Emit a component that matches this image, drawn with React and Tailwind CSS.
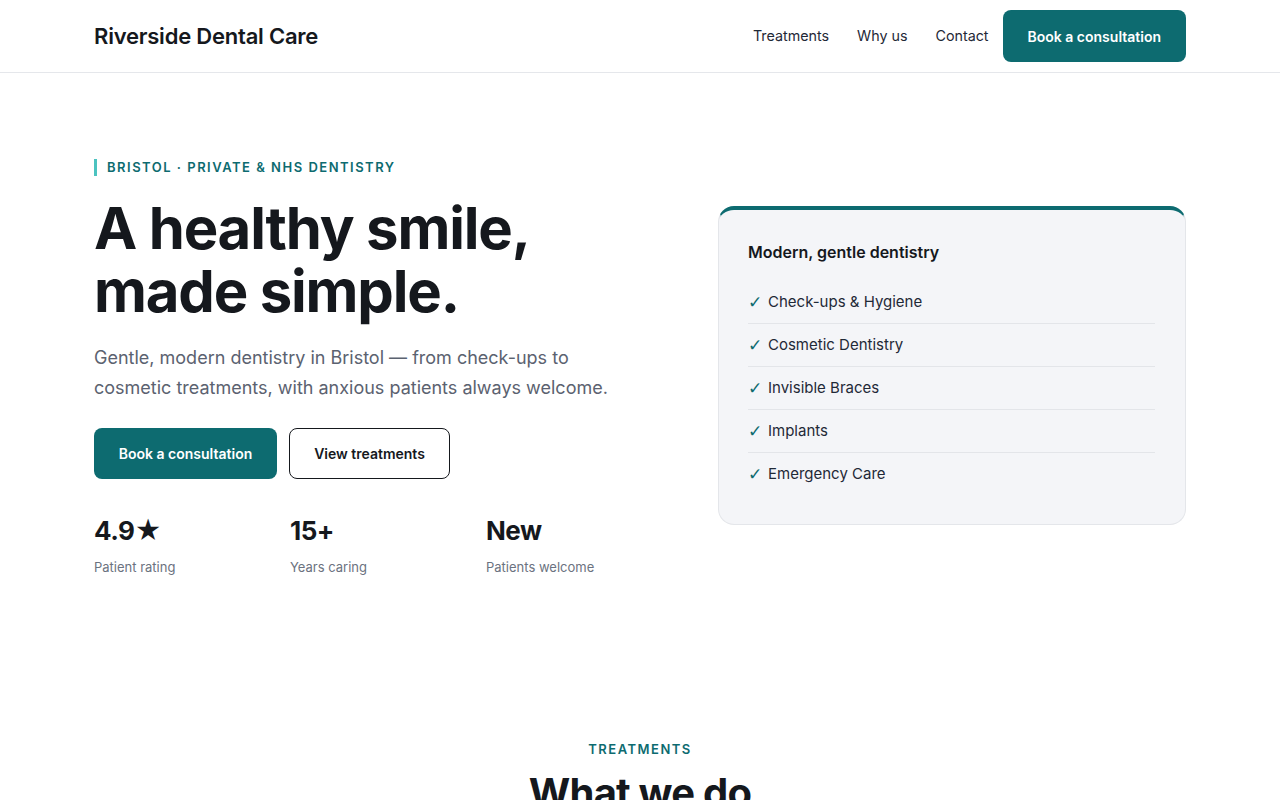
export default function App() {
  const items = ["Check-ups & Hygiene", "Cosmetic Dentistry", "Invisible Braces", "Implants", "Emergency Care"];
  const stats = [
    ["4.9★", "Patient rating"],
    ["15+", "Years caring"],
    ["New", "Patients welcome"],
  ];
  return (
    <div className="min-h-screen bg-white text-[#15181d] font-['Inter','Liberation_Sans',sans-serif]">
      <header className="border-b border-[#e5e7eb] bg-white">
        <div className="mx-auto max-w-[1140px] px-6 h-[72px] flex items-center justify-between">
          <div className="text-[22px] font-semibold tracking-[-0.01em] text-[#15181d]">Riverside Dental Care</div>
          <nav className="flex items-center">
            <a className="text-[14.3px] text-[#1f2937] mr-[28px]">Treatments</a>
            <a className="text-[14.3px] text-[#1f2937] mr-[28px]">Why us</a>
            <a className="text-[14.3px] text-[#1f2937] mr-[14px]">Contact</a>
            <a className="h-[52px] px-[25px] rounded-lg bg-[#0d6b70] text-white text-[14px] font-semibold flex items-center">Book a consultation</a>
          </nav>
        </div>
      </header>

      <section className="mx-auto max-w-[1140px] px-6 pt-[85px] pb-[83px]">
        <div className="grid grid-cols-[1fr_468px] gap-16 items-center">
          <div>
            <div className="flex items-center gap-[10px]">
              <span className="w-[3px] h-[17px] bg-[#4cc3c0]"></span>
              <span className="text-[13px] font-semibold tracking-[0.115em] text-[#0d6b70]">BRISTOL · PRIVATE &amp; NHS DENTISTRY</span>
            </div>
            <h1 className="mt-[19px] text-[58px] leading-[63px] font-bold tracking-[-0.02em] text-[#15181d]">
              A healthy smile,<br />made simple.
            </h1>
            <p className="mt-[20px] max-w-[520px] text-[18px] leading-[30px] text-[#5b6270]">
              Gentle, modern dentistry in Bristol — from check-ups to cosmetic treatments, with anxious patients always welcome.
            </p>
            <div className="mt-[25px] flex gap-3">
              <a className="h-[51px] w-[183px] rounded-lg bg-[#0d6b70] text-white text-[14px] font-semibold flex items-center justify-center">Book a consultation</a>
              <a className="h-[51px] w-[161px] rounded-lg border border-[#15181d] text-[#15181d] text-[14px] font-semibold flex items-center justify-center">View treatments</a>
            </div>
            <div className="mt-[35px] grid grid-cols-3 gap-7">
              {stats.map(([n, l]) => (
                <div key={l}>
                  <div className="text-[26px] leading-[34px] font-bold tracking-[-0.02em] text-[#15181d]">{n}</div>
                  <div className="mt-[10px] text-[13px] text-[#6b7280]">{l}</div>
                </div>
              ))}
            </div>
          </div>
          <div className="mb-[4px] rounded-2xl bg-[#f4f5f8] border border-[#e4e6ea] border-t-4 border-t-[#0d6b70] pl-[29px] pr-[30px] pt-[30px] pb-[28px]">
            <div className="text-[16px] font-semibold text-[#15181d]">Modern, gentle dentistry</div>
            <ul className="mt-[17px]">
              {items.map((it, i) => (
                <li key={it} className={"flex items-center gap-[7px] h-[43px] text-[15px] text-[#1f2937] " + (i < items.length - 1 ? "border-b border-[#e3e5e9]" : "")}>
                  <span className="text-[#0d6b70] text-[17px] leading-none w-[13px] font-bold font-['DejaVu_Sans',sans-serif]">✓</span>
                  <span>{it}</span>
                </li>
              ))}
            </ul>
          </div>
        </div>
      </section>

      <section className="mx-auto max-w-[1140px] px-6 pt-[80px] text-center">
        <div className="text-[13px] font-semibold tracking-[0.115em] text-[#0d6b70]">TREATMENTS</div>
        <h2 className="mt-[3px] text-[40px] leading-[60px] font-bold tracking-[-0.02em] text-[#15181d]">What we do</h2>
      </section>
    </div>
  );
}
